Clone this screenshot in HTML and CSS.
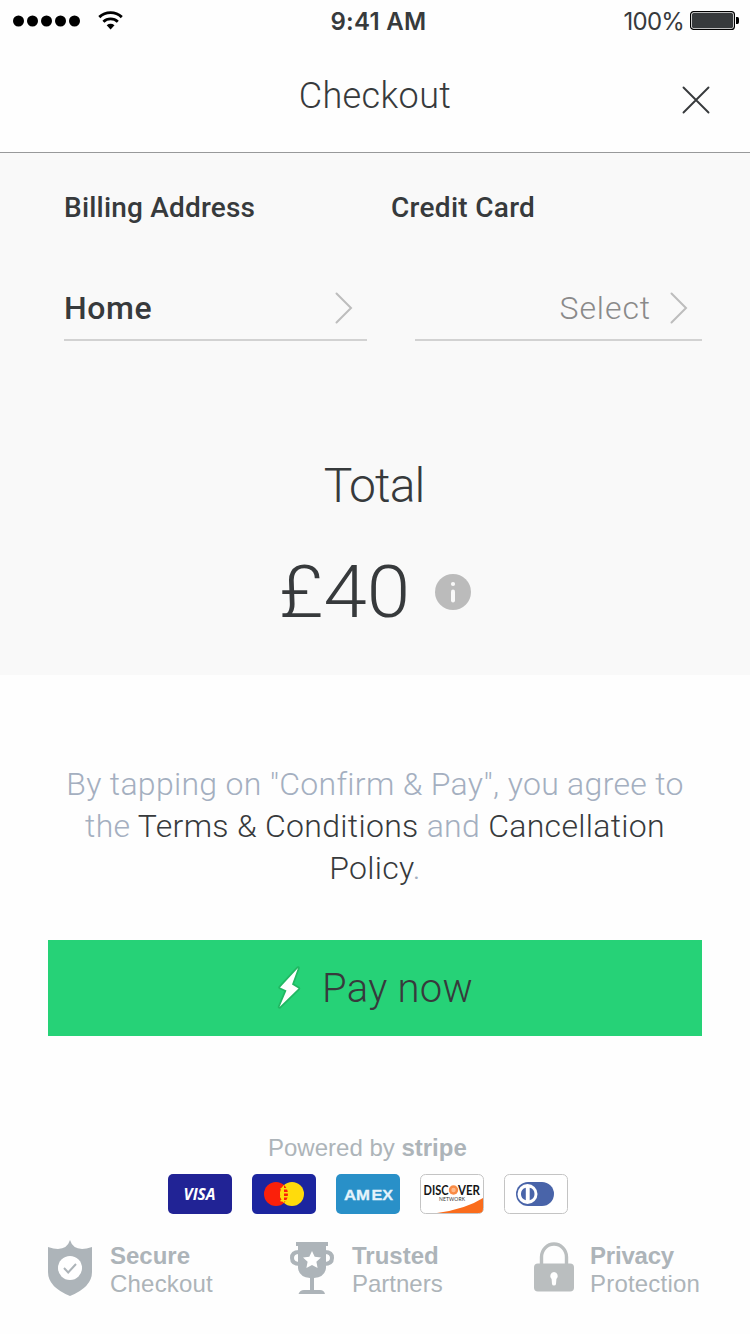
FILE: index.html
```html
<!DOCTYPE html>
<html lang="en">
<head>
<meta charset="utf-8">
<title>Checkout</title>
<link rel="stylesheet" href="styles.css">
</head>
<body>
<main class="screen">
  <div class="status">
    <div class="status-left">
      <svg width="68" height="12" viewBox="0 0 68 12"><circle cx="5.500" cy="6" r="5.500"/><circle cx="19.500" cy="6" r="5.500"/><circle cx="33.500" cy="6" r="5.500"/><circle cx="47.500" cy="6" r="5.500"/><circle cx="61.500" cy="6" r="5.500"/></svg>
      <svg width="26" height="20" viewBox="0 0 26 20"><path d="M1.300 6.100a16.500 16.500 0 0 1 22.500 0M5.400 10.700a10.600 10.600 0 0 1 14.400 0" fill="none" stroke="#000" stroke-width="2.900"/><path d="M8.700 14.300a6.500 6.500 0 0 1 7.800 0L12.600 18.500z"/></svg>
    </div>
    <span class="time">9:41 AM</span>
    <div class="status-right">
      <span class="percent">100%</span>
      <svg width="49" height="20" viewBox="0 0 49 20"><rect x=".6" y=".6" width="43.800" height="17.800" rx="3" fill="#fff" stroke="#000" stroke-width="1.200"/><rect x="2" y="2" width="41" height="15" rx="1.500" fill="#373a3c"/><path d="M46 6h1.500q1.500 0 1.500 2v3q0 2-1.500 2H46z"/></svg>
    </div>
  </div>

  <header class="header">
    <h1 class="title">Checkout</h1>
    <svg class="close" width="28" height="28" viewBox="0 0 28 28"><path d="M1.500 1.500l25 25M26.500 1.500l-25 25" fill="none" stroke="#373a3c" stroke-width="1.900" stroke-linecap="round"/></svg>
  </header>

  <section class="summary">
    <div class="labels"><h2 class="label label-address">Billing Address</h2><h2 class="label label-card">Credit Card</h2></div>
    <div class="fields">
      <div class="field field-address"><span class="home">Home</span>
        <svg width="18" height="32" viewBox="0 0 18 32"><path d="M1.500 1.500L16 16 1.500 30.500" fill="none" stroke="#bdbdbd" stroke-width="2" stroke-linecap="round"/></svg></div>
      <div class="field field-card"><span class="select">Select</span>
        <svg width="18" height="32" viewBox="0 0 18 32"><path d="M1.500 1.500L16 16 1.500 30.500" fill="none" stroke="#bdbdbd" stroke-width="2" stroke-linecap="round"/></svg></div>
    </div>
    <div class="total">Total</div>
    <div class="amount-row">
      <span class="amount">£40</span>
      <svg width="36" height="36" viewBox="0 0 36 36"><circle cx="18" cy="18" r="18" fill="#bbb"/><circle cx="18" cy="10" r="2.100" fill="#f9f9f9"/><rect x="16" y="15.500" width="4" height="13" rx="2" fill="#f9f9f9"/></svg>
    </div>
  </section>

  <section class="action">
    <p class="terms">By tapping on "Confirm &amp; Pay", you agree to<br>the <a class="link">Terms &amp; Conditions</a> and <a class="link">Cancellation</a><br><a class="link">Policy</a>.</p>
    <button class="pay">
      <svg class="bolt" width="24" height="46" viewBox="0 0 24 46"><path d="M21 4L3 23.500l6.500 3L2.500 43 21.500 24.500l-6.500-4z" fill="#fff" stroke="#21b863" stroke-width="3.500" stroke-linejoin="round" paint-order="stroke"/></svg>
      <span class="pay-text">Pay now</span>
    </button>
  </section>

  <footer class="footer">
    <div class="powered">Powered by <b>stripe</b></div>
    <div class="cards">
      <svg width="64" height="40" viewBox="0 0 64 40"><rect width="64" height="40" rx="5" fill="#212395"/><text x="15.500" y="26" textLength="32" lengthAdjust="spacingAndGlyphs" class="visa">VISA</text></svg>
      <svg width="64" height="40" viewBox="0 0 64 40"><rect width="64" height="40" rx="5" fill="#1c259f"/><circle cx="24" cy="20" r="12" fill="#fb200a"/><circle cx="40" cy="20" r="12" fill="#ffdb0c"/><path d="M32 11.100a12 12 0 0 1 0 17.800z" fill="#fb200a"/><path d="M28.500 14.700h7M28 18.700h8M28 22.700h8M28.500 26.700h6" stroke="#ffdb0c" stroke-width="1.500"/></svg>
      <svg width="64" height="40" viewBox="0 0 64 40"><rect width="64" height="40" rx="5" fill="#2990c8"/><text x="8" y="26" textLength="26" lengthAdjust="spacingAndGlyphs" class="amex">AM</text><text x="35.500" y="26" textLength="21.500" lengthAdjust="spacingAndGlyphs" class="amex">EX</text></svg>
      <svg width="64" height="40" viewBox="0 0 64 40"><rect x=".5" y=".5" width="63" height="39" rx="5" fill="#fff" stroke="#c4c4c4"/><path d="M63 24v11q0 4-4 4H17Q46 35 63 24z" fill="#fa6c1c"/><text x="3.500" y="21" textLength="25" lengthAdjust="spacingAndGlyphs" class="disc">DISC</text><circle cx="33.500" cy="16" r="4.700" fill="#f98b45"/><circle cx="33.500" cy="16" r="2.200" fill="#ffb98a"/><text x="38" y="21" textLength="22" lengthAdjust="spacingAndGlyphs" class="disc">VER</text><text x="19" y="26.500" textLength="26" class="net">NETWORK</text></svg>
      <svg width="64" height="40" viewBox="0 0 64 40"><rect x=".5" y=".5" width="63" height="39" rx="5" fill="#fff" stroke="#c4c4c4"/><rect x="12" y="8" width="38" height="24" rx="12" fill="#4964a9"/><circle cx="23.500" cy="20" r="10" fill="#fff"/><path d="M21.800 13.800v12.400a6.400 6.400 0 0 1 0-12.400zM25.700 13.800v12.400a6.400 6.400 0 0 0 0-12.400z" fill="#4964a9"/></svg>
    </div>
    <div class="badges">
      <div class="badge secure">
        <svg width="44" height="56" viewBox="0 0 44 56"><path d="M0 7q18 6 22-7 4 13 22 7v25q0 15-22 24Q0 47 0 32z" fill="#adb4b9"/><circle cx="22" cy="28" r="12" fill="#fff"/><path d="M16 28l4.200 4.500 7.800-8.500" fill="none" stroke="#adb4b9" stroke-width="2"/></svg>
        <div class="badge-text"><b>Secure</b><span class="wide">Checkout</span></div>
      </div>
      <div class="badge trusted">
        <svg width="44" height="52" viewBox="0 0 44 52"><path d="M6 0h32v4h-2v22q-1 9-12 10v12h6q4 0 5 4H8.500q1.500-4 5.500-4h6V36Q9 35 8 26V4H6z" fill="#adb4b9"/><path d="M9 10q-7 0-7 6t8 6M35 10q7 0 7 6t-8 6" fill="none" stroke="#adb4b9" stroke-width="4"/><path d="M22 9l2.700 5.700 6.300.8-4.600 4.300 1.200 6.200-5.600-3-5.600 3 1.200-6.200-4.600-4.300 6.300-.8z" fill="#fff"/></svg>
        <div class="badge-text"><b>Trusted</b><span>Partners</span></div>
      </div>
      <div class="badge privacy">
        <svg width="40" height="50" viewBox="0 0 40 50"><path d="M7.500 23V15a12.500 13 0 0 1 25 0V23" fill="none" stroke="#babebf" stroke-width="3.400"/><rect y="21.500" width="40" height="28" rx="4" fill="#babebf"/><path d="M20 30a4 4 0 0 0-2.400 7l.4 5q.2 1.500 2 1.500t2-1.500l.4-5A4 4 0 0 0 20 30z" fill="#fff"/></svg>
        <div class="badge-text"><b class="tight">Privacy</b><span class="wide">Protection</span></div>
      </div>
    </div>
  </footer>
</main>
</body>
</html>
```
FILE: styles.css
```css
* { box-sizing: border-box; }
body { margin: 0; background: #fefefe; color: #373a3c; font-family: Roboto, sans-serif; font-weight: 300; }
svg { display: block; flex: none; }
h1, h2, p { margin: 0; font-weight: inherit; }
.screen { width: 750px; height: 1334px; overflow: hidden; }

.status { height: 40px; display: grid; grid-template-columns: 1fr auto 1fr; align-items: center; padding: 0 11px 0 13px; font-family: Inter, sans-serif; font-size: 24px; }
.status-left { display: flex; align-items: center; gap: 17px; }
.status-right { display: flex; align-items: center; justify-content: flex-end; gap: 6px; }
.time { font-weight: 600; line-height: 39px; letter-spacing: 0.3px; padding-left: 5px; padding-top: 2px; }
.percent { font-weight: 400; line-height: 39px; letter-spacing: -0.8px; padding-top: 2px; }

.header { height: 113px; border-bottom: 1px solid #98999a; display: grid; grid-template-columns: 1fr auto 1fr; align-items: start; padding-right: 40px; }
.title { grid-column: 2; margin-left: 40px; padding-top: 34px; font-size: 36px; line-height: 44px; letter-spacing: 0.4px; }
.close { justify-self: end; margin-top: 46px; }

.summary { height: 522px; background: #f9f9f9; padding-top: 37px; }
.labels { display: flex; padding-left: 64px; height: 35px; }
.label { font-size: 28px; font-weight: 500; line-height: 36px; letter-spacing: 0.2px; white-space: nowrap; }
.label-address { width: 327px; }
.label-card { letter-spacing: 0.3px; }
.fields { display: flex; gap: 48px; padding: 55px 48px 0 64px; }
.field { height: 61px; border-bottom: 2px solid #d2d2d2; display: flex; align-items: center; font-size: 32px; line-height: 40px; padding-bottom: 3px; }
.field-address { width: 303px; justify-content: space-between; padding-right: 14px; }
.field-card { width: 287px; justify-content: flex-end; gap: 19px; padding-right: 14px; }
.home { font-weight: 500; letter-spacing: 0.6px; }
.select { color: #8a8a8a; letter-spacing: 0.9px; }
.total { padding: 115px 2px 0 0; text-align: center; font-size: 48px; line-height: 60px; letter-spacing: -0.9px; }
.amount-row { display: flex; align-items: center; justify-content: center; gap: 30px; padding: 32px 0 0 5px; }
.amount { font-size: 72px; line-height: 86px; padding-top: 2px; transform: scaleX(1.085); }

.action { padding: 88px 48px 0; }
.terms { text-align: center; font-size: 32px; line-height: 42px; letter-spacing: 0.3px; color: #a4afc0; white-space: nowrap; }
.link { color: #373a3c; }
.pay { width: 654px; height: 96px; margin-top: 51px; padding: 0; border: 0; background: #26d277; color: #373a3c; font: 300 40px/48px Roboto, sans-serif; display: flex; align-items: center; justify-content: center; gap: 21px; }
.pay-text { letter-spacing: 0.3px; padding-top: 2px; }
.bolt { margin-bottom: 2px; }

.footer { padding: 96px 48px 0; font-family: "Liberation Sans", Arial, sans-serif; font-size: 24px; font-weight: 400; color: #adb4b9; }
.powered { line-height: 32px; padding-left: 220px; }
.cards { display: flex; gap: 20px; padding: 10px 0 0 120px; }
.visa { font: italic 700 16px "Open Sans", sans-serif; fill: #fff; }
.amex { font: 700 15px "Liberation Sans", sans-serif; fill: #e4f3fb; stroke: #e4f3fb; stroke-width: 0.3px; }
.disc { font: 700 13px Lato, sans-serif; fill: #151515; }
.net { font: 400 5px Lato, sans-serif; fill: #333; }
.badges { display: flex; padding-top: 26px; }
.badge { display: flex; align-items: flex-start; }
.badge-text { display: flex; flex-direction: column; line-height: 28px; padding-top: 2px; }
.wide { letter-spacing: 0.2px; }
.tight { letter-spacing: -0.2px; }
.secure { width: 242px; gap: 18px; }
.trusted { width: 244px; gap: 18px; }
.trusted svg { margin-top: 2px; }
.privacy { gap: 16px; }
.privacy svg { margin-top: 2px; }
```
